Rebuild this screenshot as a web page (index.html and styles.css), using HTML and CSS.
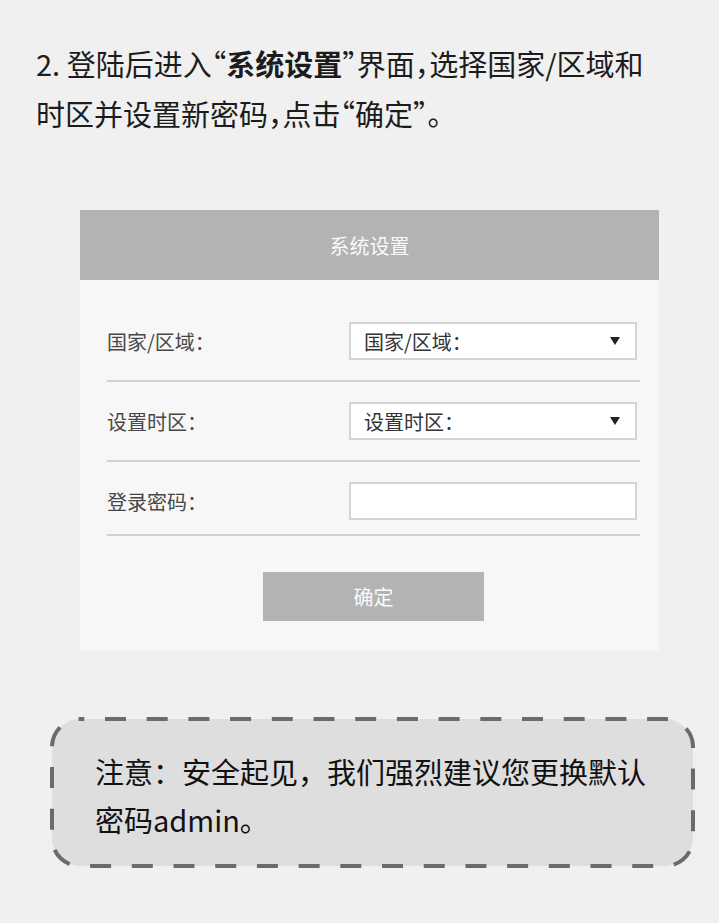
FILE: index.html
```html
<!DOCTYPE html>
<html lang="zh-CN">
<head>
    <meta charset="UTF-8">
    <meta name="viewport" content="width=device-width, initial-scale=1.0">
    <title>系统设置</title>
    <link rel="stylesheet" href="styles.css">
</head>
<body>
    <p class="intro">2. 登陆后进入“<strong>系统设置</strong>”界面，选择国家/区域和时区并设置新密码，点击“确定”。</p>

    <div class="panel">
        <div class="panel-title">系统设置</div>
        <form class="panel-body">
            <div class="field">
                <label>国家/区域：</label>
                <div class="select"><span>国家/区域：</span><i class="caret"></i></div>
            </div>
            <div class="field">
                <label>设置时区：</label>
                <div class="select"><span>设置时区：</span><i class="caret"></i></div>
            </div>
            <div class="field last">
                <label for="password">登录密码：</label>
                <input type="password" id="password" class="text-input">
            </div>
            <div class="actions">
                <button type="button" class="confirm-btn">确定</button>
            </div>
        </form>
    </div>

    <div class="notice">
        <svg class="notice-border" width="645" height="151" viewBox="0 0 645 151">
            <rect x="2" y="2" width="641" height="147" rx="28" ry="28"
                  fill="#dedede" stroke="#6b6b6b" stroke-width="4"
                  stroke-dasharray="21 20.7" stroke-dashoffset="-25"/>
        </svg>
        <p>注意：安全起见，我们强烈建议您更换默认密码admin。</p>
    </div>
</body>
</html>
```

FILE: styles.css
```css
:root {
    --page-bg: #f0f0f0;
    --panel-bg: #f7f7f7;
    --grey: #b3b3b3;
    --line: #d0d0d0;
    --text: #1c1c1c;
    --label: #474747;
}

body {
    margin: 0;
    background-color: var(--page-bg);
    font-family: "Noto Sans CJK SC", "Noto Sans", sans-serif;
    color: var(--text);
}

.intro {
    margin: 38px 0 0;
    padding-left: 36px;
    max-width: 616px;
    font-size: 29px;
    line-height: 50px;
    font-feature-settings: "halt";
}

.intro strong {
    font-weight: 700;
}

.panel {
    margin: 72px 0 0 80px;
    width: 579px;
    background-color: var(--panel-bg);
}

.panel-title {
    height: 70px;
    background-color: var(--grey);
    color: #fafafa;
    font-size: 20px;
    display: flex;
    align-items: center;
    justify-content: center;
}

.panel-body {
    padding: 22px 19px 30px 27px;
    margin: 0;
}

.field {
    display: flex;
    align-items: center;
    padding: 20px 3px 20px 0;
    border-bottom: 2px solid var(--line);
    font-size: 20px;
}

.field.last {
    padding-bottom: 14px;
}

.field label {
    width: 242px;
    color: var(--label);
}

.select,
.text-input {
    box-sizing: border-box;
    width: 288px;
    height: 38px;
    border: 2px solid #d4d4d4;
    background-color: #fff;
}

.select {
    display: flex;
    align-items: center;
    justify-content: space-between;
    padding: 0 15px 0 13px;
    color: #333;
}

.caret {
    width: 0;
    height: 0;
    border-left: 5px solid transparent;
    border-right: 5px solid transparent;
    border-top: 8px solid #222;
}

.text-input {
    margin: 0;
    padding: 0 10px;
    font: inherit;
    outline: none;
}

.actions {
    display: flex;
    justify-content: center;
    padding-top: 36px;
}

.confirm-btn {
    width: 221px;
    height: 49px;
    border: none;
    background-color: var(--grey);
    color: #fafafa;
    font-family: inherit;
    font-size: 20px;
    cursor: pointer;
}

.notice {
    position: relative;
    box-sizing: border-box;
    width: 645px;
    height: 151px;
    margin: 66px 0 0 50px;
    padding: 30px 45px 0 45px;
}

.notice-border {
    position: absolute;
    top: 0;
    left: 0;
}

.notice p {
    position: relative;
    margin: 0;
    font-size: 29px;
    line-height: 48px;
    color: #111;
}
```
